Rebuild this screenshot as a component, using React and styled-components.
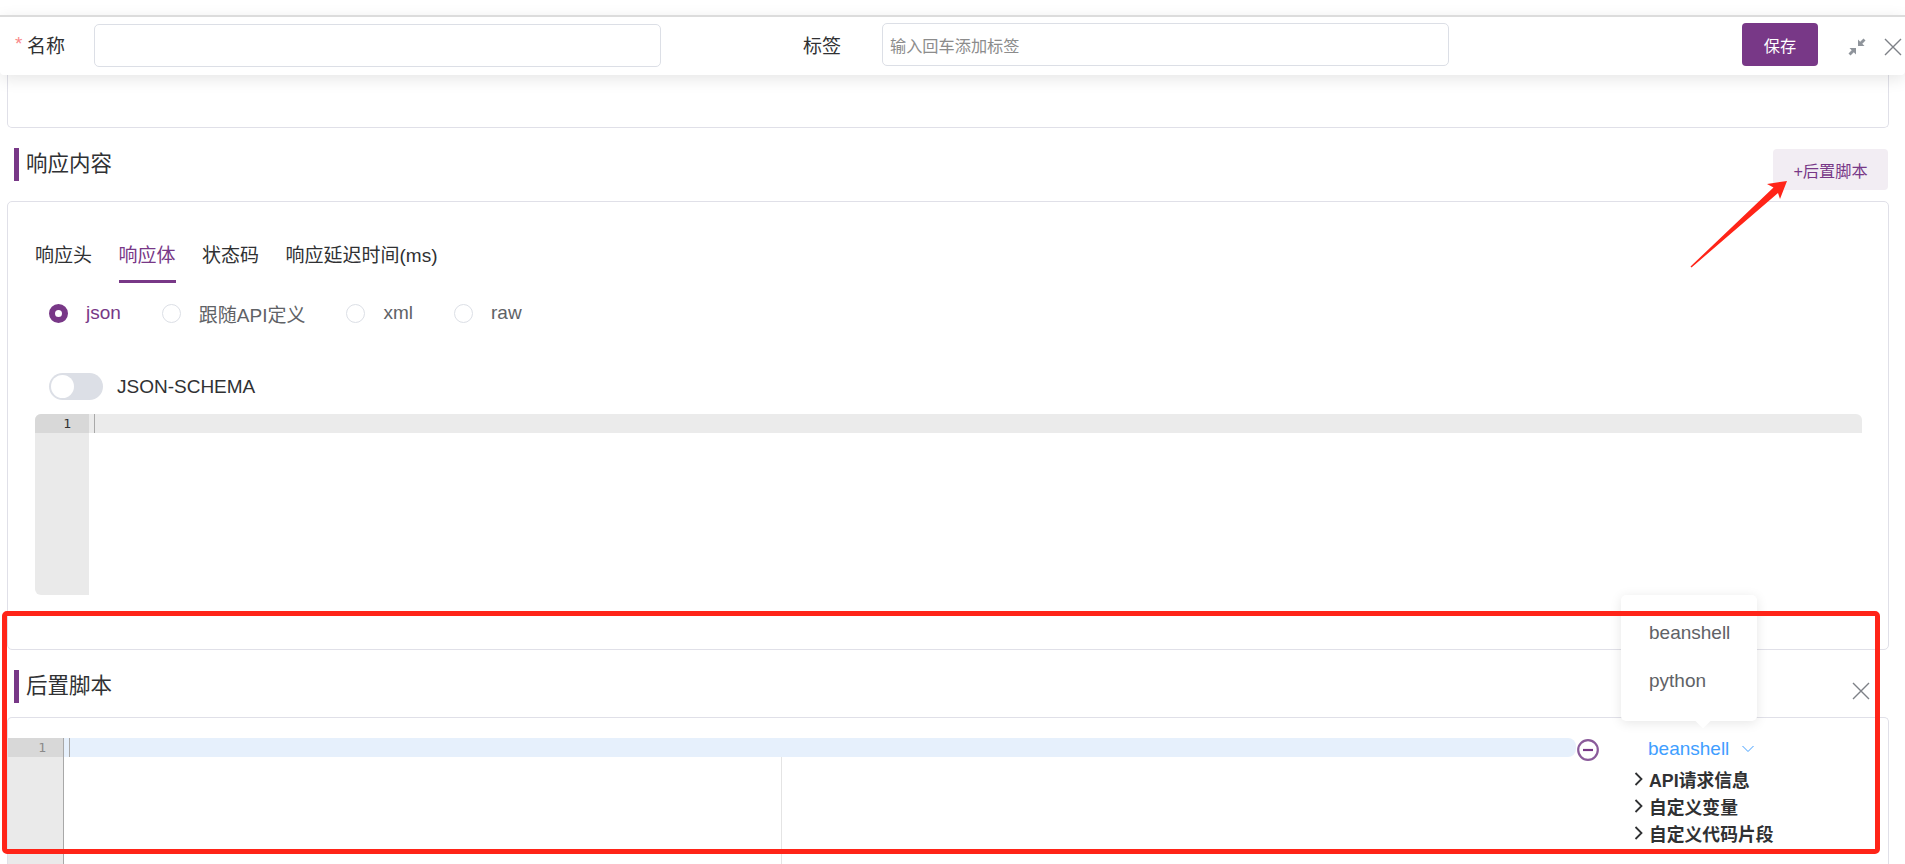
import React from "react";
import styled, { createGlobalStyle } from "styled-components";

const Global = createGlobalStyle`
  html, body { margin: 0; padding: 0; background: #fff; overflow: hidden; }
  body { font-family: "Liberation Sans", "Noto Sans CJK SC", sans-serif; color: #303133; }
  * { box-sizing: border-box; }
`;

const purple = "#783887";
const line = "#e0e0e8";

const Page = styled.div`
  position: relative;
  width: 1905px;
  height: 864px;
  overflow: hidden;
  padding-top: 15px;
`;
const HeaderBar = styled.header`
  position: relative;
  z-index: 2;
  height: 60px;
  border-top: 2px solid #dcdcdc;
  background: #fff;
  border-radius: 0 0 4px 4px;
  box-shadow: 0 4px 16px rgba(0, 0, 0, 0.1);
  display: flex;
  align-items: center;
  padding-left: 15px;
  font-size: 19px;
`;
const Required = styled.span`
  color: #f98a8a;
  font-size: 19px;
  width: 12px;
  margin-top: -4px;
`;
const FieldLabel = styled.label`
  width: ${(p) => p.$w}px;
  margin-left: ${(p) => p.$ml || 0}px;
  margin-top: -4px;
`;
const Input = styled.div`
  width: ${(p) => p.$w}px;
  height: 43px;
  margin-top: ${(p) => p.$mt || 0}px;
  border: 1px solid #dcdfe6;
  border-radius: 5px;
  padding-left: 7px;
  display: flex;
  align-items: center;
  font-size: 16.2px;
  color: #8c8c8c;
`;
const SaveButton = styled.button`
  width: 76px;
  height: 43px;
  margin-left: 293px;
  margin-top: -3px;
  background: ${purple};
  color: #fff;
  border: 0;
  border-radius: 4px;
  font: inherit;
  font-size: 16.2px;
`;
const IconSlot = styled.span`
  display: inline-flex;
  margin-left: ${(p) => p.$ml}px;
  margin-top: 2px;
`;
const Section = styled.section`
  padding: 0 16px 0 7px;
`;
const StubCard = styled.div`
  height: 53px;
  border: 1px solid ${line};
  border-top: 0;
  border-radius: 0 0 5px 5px;
`;
const TitleRow = styled.div`
  display: flex;
  align-items: center;
  justify-content: space-between;
  height: ${(p) => p.$h}px;
  padding: ${(p) => p.$pt || 0}px 1px 0 7px;
`;
const Title = styled.h3`
  margin: 0;
  height: 33px;
  border-left: 5px solid ${purple};
  padding-left: 7px;
  font-size: 21.5px;
  font-weight: 400;
  line-height: 32px;
  color: #303133;
`;
const AddButton = styled.button`
  width: 115px;
  height: 41px;
  margin-top: 10px;
  border: 0;
  border-radius: 4px;
  background: #f2edf3;
  color: ${purple};
  font: inherit;
  font-size: 16.2px;
`;
const Card = styled.div`
  border: 1px solid ${line};
  border-radius: 5px;
  height: 449px;
  padding: 33px 26px 0 27px;
`;
const Tabs = styled.div`
  display: flex;
  gap: 26.5px;
  height: 48px;
  font-size: 19px;
`;
const Tab = styled.div`
  height: 48px;
  padding-top: 10px;
  line-height: 22px;
  color: ${(p) => (p.$active ? purple : "#303133")};
  border-bottom: 3px solid ${(p) => (p.$active ? purple : "transparent")};
`;
const Radios = styled.div`
  display: flex;
  align-items: center;
  margin: 19px 0 0 14px;
  height: 22px;
  font-size: 19px;
`;
const RadioDot = styled.span`
  width: 19px;
  height: 19px;
  border-radius: 50%;
  border: ${(p) => (p.$on ? `6px solid ${purple}` : "1px solid #dcdfe6")};
  background: #fff;
  margin-right: 18px;
`;
const RadioLabel = styled.span`
  color: ${(p) => (p.$on ? purple : "#606266")};
  margin-right: 41px;
`;
const SwitchRow = styled.div`
  display: flex;
  align-items: center;
  gap: 14px;
  margin: 49px 0 0 14px;
  height: 27px;
  font-size: 19px;
`;
const SwitchTrack = styled.span`
  width: 54px;
  height: 27px;
  border-radius: 14px;
  background: #dcdfe6;
  padding: 2px;
`;
const SwitchKnob = styled.span`
  display: block;
  width: 23px;
  height: 23px;
  border-radius: 50%;
  background: #fff;
`;
const Editor = styled.div`
  display: flex;
  height: 181px;
  margin-top: 14px;
  border-radius: 6px 6px 0 6px;
  overflow: hidden;
  font-family: "DejaVu Sans Mono", monospace;
`;
const Gutter = styled.div`
  width: ${(p) => p.$w}px;
  flex: none;
  background: #eaeaea;
  border-right: ${(p) => (p.$rule ? "1px solid #a8a8a8" : "0")};
`;
const GutterLine = styled.div`
  height: 19px;
  background: #d8d8d8;
  text-align: right;
  padding-right: ${(p) => p.$pr}px;
  font-size: 13px;
  line-height: 19px;
  color: ${(p) => p.$c};
`;
const CodeArea = styled.div`
  flex: 1;
  min-width: 0;
`;
const ActiveLine = styled.div`
  height: 19px;
  padding-left: 5px;
  background: ${(p) => p.$bg};
  border-radius: ${(p) => p.$r || "0"};
  &::before {
    content: "";
    display: block;
    width: 1px;
    height: 19px;
    background: #a9a9a9;
  }
`;
const ScriptCard = styled.div`
  height: 160px;
  border: 1px solid ${line};
  border-bottom: 0;
  border-radius: 5px 5px 0 0;
  padding-top: 20px;
  display: flex;
`;
const ScriptEditor = styled.div`
  display: flex;
  width: 1568px;
  flex: none;
  font-family: "DejaVu Sans Mono", monospace;
`;
const PrintMargin = styled.div`
  width: 1px;
  height: 110px;
  margin-left: 717px;
  background: #e4e4e4;
`;
const ScriptSide = styled.div`
  flex: none;
  display: flex;
  flex-direction: column;
`;
const RemoveIcon = styled.span`
  display: inline-flex;
  margin: 1px 0 0 1px;
  width: 22px;
  height: 22px;
`;
const LangRow = styled.div`
  display: flex;
  align-items: center;
  height: 21px;
  margin-left: 49px;
  font-size: 19px;
  color: #409eff;
  gap: 13px;
`;
const TreeList = styled.ul`
  list-style: none;
  margin: 6px 0 0 35px;
  padding: 0;
`;
const TreeRow = styled.li`
  display: flex;
  align-items: center;
  gap: 6px;
  height: 27px;
  font-size: 17.8px;
  font-weight: 700;
  color: #303133;
`;
const ScriptBody = styled.div`
  display: flex;
  flex: none;
`;
const Popover = styled.div`
  position: absolute;
  left: 1621px;
  top: 595px;
  width: 136px;
  height: 126px;
  z-index: 3;
  padding: 14px 0 0 28px;
  background: #fff;
  border-radius: 5px;
  box-shadow: 0 2px 12px rgba(0, 0, 0, 0.1);
  font-size: 19px;
  color: #606266;
  &::after {
    content: "";
    position: absolute;
    left: 76px;
    bottom: -5px;
    width: 12px;
    height: 12px;
    background: #fff;
    transform: rotate(45deg);
  }
`;
const PopItem = styled.div`
  height: 48px;
  line-height: 48px;
`;
const CloseSlot = styled.span`
  position: absolute;
  left: 1852px;
  top: 682px;
  z-index: 2;
  display: inline-flex;
`;
const RedBox = styled.div`
  position: absolute;
  left: 2px;
  top: 611px;
  width: 1878px;
  height: 243px;
  z-index: 5;
  border: 5px solid #ff2418;
  border-radius: 5px;
  pointer-events: none;
`;
const Arrow = styled.svg`
  position: absolute;
  left: 1685px;
  top: 175px;
  z-index: 5;
`;

const X = ({ size = 18, color = "#7d8187" }) => (
  <svg width={size} height={size} viewBox="0 0 18 18" fill="none" stroke={color} strokeWidth="1.4">
    <path d="M1 1 L17 17 M17 1 L1 17" />
  </svg>
);
const Collapse = () => (
  <svg width="18" height="18" viewBox="0 0 18 18" fill="#8f949b">
    <path d="M10 8 V1.5 L12.2 3.7 L15.5 0.5 L17.5 2.5 L14.3 5.8 L16.5 8 Z" />
    <path d="M8 10 V16.5 L5.8 14.3 L2.5 17.5 L0.5 15.5 L3.7 12.2 L1.5 10 Z" />
  </svg>
);
const Chevron = () => (
  <svg width="9" height="14" viewBox="0 0 9 14" fill="none" stroke="#303133" strokeWidth="1.8">
    <path d="M1.5 1 L7.5 7 L1.5 13" />
  </svg>
);
const Down = () => (
  <svg width="12" height="8" viewBox="0 0 12 8" fill="none" stroke="#409eff" strokeWidth="1">
    <path d="M0.5 1 L6 6.5 L11.5 1" />
  </svg>
);
const Minus = () => (
  <svg width="22" height="22" viewBox="0 0 22 22" fill="none" stroke="#8a5a9a" strokeWidth="2.2">
    <circle cx="11" cy="11" r="9.8" />
    <path d="M6 11 H16" stroke={purple} strokeWidth="2.2" />
  </svg>
);

export default function App() {
  return (
    <Page>
      <Global />
      <HeaderBar>
        <Required>*</Required>
        <FieldLabel $w={67}>名称</FieldLabel>
        <Input $w={567} $mt={-1} />
        <FieldLabel $w={79} $ml={142}>标签</FieldLabel>
        <Input $w={567} $mt={-3}>输入回车添加标签</Input>
        <SaveButton>保存</SaveButton>
        <IconSlot $ml={30}><Collapse /></IconSlot>
        <IconSlot $ml={18}><X /></IconSlot>
      </HeaderBar>
      <Section>
        <StubCard />
        <TitleRow $h={73}>
          <Title>响应内容</Title>
          <AddButton>+后置脚本</AddButton>
        </TitleRow>
        <Card>
          <Tabs>
            <Tab>响应头</Tab>
            <Tab $active>响应体</Tab>
            <Tab>状态码</Tab>
            <Tab>响应延迟时间(ms)</Tab>
          </Tabs>
          <Radios>
            <RadioDot $on />
            <RadioLabel $on>json</RadioLabel>
            <RadioDot />
            <RadioLabel>跟随API定义</RadioLabel>
            <RadioDot />
            <RadioLabel>xml</RadioLabel>
            <RadioDot />
            <RadioLabel>raw</RadioLabel>
          </Radios>
          <SwitchRow>
            <SwitchTrack><SwitchKnob /></SwitchTrack>
            <span>JSON-SCHEMA</span>
          </SwitchRow>
          <Editor>
            <Gutter $w={54}>
              <GutterLine $pr={18} $c="#333">1</GutterLine>
            </Gutter>
            <CodeArea>
              <ActiveLine $bg="#ebebeb" />
            </CodeArea>
          </Editor>
        </Card>
        <TitleRow $h={67} $pt={6}>
          <Title>后置脚本</Title>
        </TitleRow>
        <ScriptCard>
          <ScriptEditor>
            <Gutter $w={56} $rule>
              <GutterLine $pr={17} $c="#8a8a8a">1</GutterLine>
            </Gutter>
            <CodeArea>
              <ActiveLine $bg="#e6f0fc" $r="0 8px 8px 0" />
              <PrintMargin />
            </CodeArea>
          </ScriptEditor>
          <ScriptBody>
            <RemoveIcon><Minus /></RemoveIcon>
            <ScriptSide>
              <LangRow>beanshell <Down /></LangRow>
              <TreeList>
                <TreeRow><Chevron />API请求信息</TreeRow>
                <TreeRow><Chevron />自定义变量</TreeRow>
                <TreeRow><Chevron />自定义代码片段</TreeRow>
              </TreeList>
            </ScriptSide>
          </ScriptBody>
        </ScriptCard>
      </Section>
      <CloseSlot><X /></CloseSlot>
      <Popover>
        <PopItem>beanshell</PopItem>
        <PopItem>python</PopItem>
      </Popover>
      <RedBox />
      <Arrow width="110" height="100" viewBox="0 0 110 100">
        <path d="M102 6 L82 9 L88.5 12.5 L5.5 91.5 L6.5 92.5 L93 18 L95 24 Z" fill="#ff2418" />
      </Arrow>
    </Page>
  );
}
